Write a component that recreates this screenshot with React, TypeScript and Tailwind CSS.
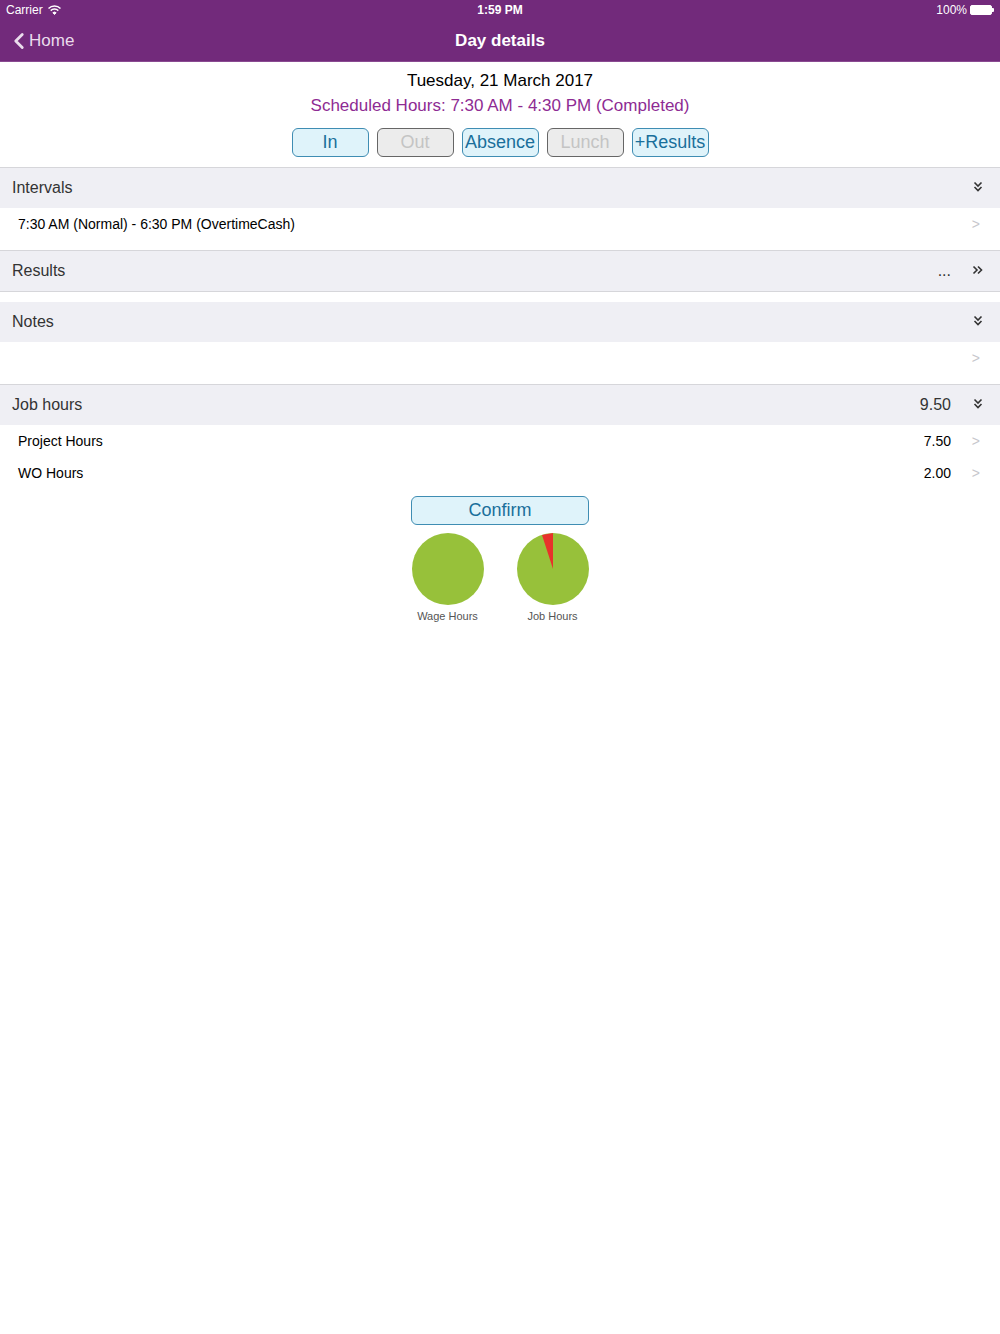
import { ChevronLeft } from "lucide-react";

const font = { fontFamily: '"Liberation Sans", Arial, sans-serif' };

const Chevron = () => <span className="w-[14px] text-right text-[14px] text-[#c7c7cc]">&gt;</span>;

const DoubleDown = () => (
  <svg width="12" height="12" viewBox="0 0 12 12" className="text-[#333]">
    <path d="M2.5 1.5 L6 5 L9.5 1.5 M2.5 6 L6 9.5 L9.5 6" fill="none" stroke="currentColor" strokeWidth="1.6" />
  </svg>
);

const DoubleRight = () => (
  <svg width="12" height="12" viewBox="0 0 12 12" className="text-[#333]">
    <path d="M1.5 2.5 L5 6 L1.5 9.5 M6 2.5 L9.5 6 L6 9.5" fill="none" stroke="currentColor" strokeWidth="1.6" />
  </svg>
);

const SectionHeader = ({ title, right, icon }: { title: string; right?: string; icon: "down" | "right" }) => (
  <div className="flex h-[40px] items-center bg-[#efeff4] pl-3 pr-[16px]">
    <span className="flex-1 text-[16px] text-[#333]">{title}</span>
    {right && <span className="mr-[21px] text-[16px] text-[#333]">{right}</span>}
    <span className="flex h-full w-[12px] items-start pt-[13px]">{icon === "down" ? <DoubleDown /> : <DoubleRight />}</span>
  </div>
);

const Row = ({ label, value, tall }: { label: string; value?: string; tall?: boolean }) => (
  <div className={tall ? "h-[42px] bg-white" : "h-[32px] bg-white"}>
    <div className="flex h-[32px] items-center pl-[18px] pr-[20px]">
      <span className="flex-1 text-[14px] text-black">{label}</span>
      {value && <span className="mr-[15px] text-[14px] text-black">{value}</span>}
      <Chevron />
    </div>
  </div>
);

const Btn = ({ label, on }: { label: string; on: boolean }) => (
  <div
    className={
      on
        ? "flex h-[29px] w-[77px] items-center justify-center rounded-[6px] border-[1.5px] border-[#3f8db3] bg-[#dff3fa] text-[18px] text-[#1a6f9b]"
        : "flex h-[29px] w-[77px] items-center justify-center rounded-[6px] border-[1.5px] border-[#666] bg-[#ececec] text-[18px] text-[#c4c4c4]"
    }
  >
    {label}
  </div>
);

const Pie = ({ slice }: { slice: boolean }) => (
  <svg width="74" height="74" viewBox="0 0 74 74">
    <circle cx="37" cy="37" r="36" fill="#97c13a" />
    {slice && <path d="M37 37 L37 1 L26 3 Z" fill="#e8322b" />}
  </svg>
);

export default function App() {
  return (
    <div className="min-h-[1334px] w-[1000px] bg-white" style={font}>
      <div className="bg-[#722a7b] text-white">
        <div className="relative flex h-[20px] items-center px-[6px] text-[12px]">
          <span className="flex items-center gap-[5px]">
            Carrier
            <svg width="13" height="10" viewBox="0 0 13 10">
              <path d="M0.5 3.5 A8.5 8.5 0 0 1 12.5 3.5" fill="none" stroke="white" strokeWidth="1.5" />
              <path d="M2.7 5.6 A5.5 5.5 0 0 1 10.3 5.6" fill="none" stroke="white" strokeWidth="1.5" />
              <path d="M4.9 7.7 A2.5 2.5 0 0 1 8.1 7.7 L6.5 9.5 Z" fill="white" stroke="white" strokeWidth="1" />
            </svg>
          </span>
          <span className="absolute left-1/2 -translate-x-1/2 font-bold">1:59 PM</span>
          <span className="ml-auto flex items-center gap-[3px]">
            100%
            <span className="flex items-center">
              <span className="h-[10px] w-[22px] rounded-[2px] border border-white bg-white" />
              <span className="h-[4px] w-[2px] rounded-r-[1px] bg-white" />
            </span>
          </span>
        </div>
        <div className="relative flex h-[42px] items-center border-b border-[#8a4a91]">
          <span className="flex items-center pl-[6px] text-[17px] text-[#eadcec]">
            <ChevronLeft size={26} strokeWidth={2.6} className="-mr-[3px]" />
            Home
          </span>
          <span className="absolute left-1/2 -translate-x-1/2 text-[17px] font-bold">Day details</span>
        </div>
      </div>

      <div className="flex flex-col items-center border-b border-[#d6d6da] pb-[10px]">
        <div className="mt-[6px] text-[17px] leading-[25px] text-black">Tuesday, 21 March 2017</div>
        <div className="text-[17px] leading-[25px] text-[#8e2b93]">Scheduled Hours: 7:30 AM - 4:30 PM (Completed)</div>
        <div className="mt-[10px] flex gap-[8px]">
          <Btn label="In" on />
          <Btn label="Out" on={false} />
          <Btn label="Absence" on />
          <Btn label="Lunch" on={false} />
          <Btn label="+Results" on />
        </div>
      </div>

      <SectionHeader title="Intervals" icon="down" />
      <Row label="7:30 AM (Normal) - 6:30 PM (OvertimeCash)" tall />
      <div className="border-t border-[#d6d6da]">
        <SectionHeader title="Results" right="..." icon="right" />
      </div>
      <div className="h-[11px] border-t border-[#d6d6da]" />
      <SectionHeader title="Notes" icon="down" />
      <Row label="" tall />
      <div className="border-t border-[#d6d6da]">
        <SectionHeader title="Job hours" right="9.50" icon="down" />
      </div>
      <Row label="Project Hours" value="7.50" />
      <Row label="WO Hours" value="2.00" />

      <div className="mt-[7px] flex flex-col items-center">
        <div className="flex h-[29px] w-[178px] items-center justify-center rounded-[6px] border-[1.5px] border-[#3f8db3] bg-[#dff3fa] text-[18px] text-[#1a6f9b]">
          Confirm
        </div>
        <div className="mt-[7px] flex gap-[31px]">
          <div className="flex flex-col items-center">
            <Pie slice={false} />
            <span className="mt-[2px] text-[11px] text-[#555]">Wage Hours</span>
          </div>
          <div className="flex flex-col items-center">
            <Pie slice />
            <span className="mt-[2px] text-[11px] text-[#555]">Job Hours</span>
          </div>
        </div>
      </div>
    </div>
  );
}
